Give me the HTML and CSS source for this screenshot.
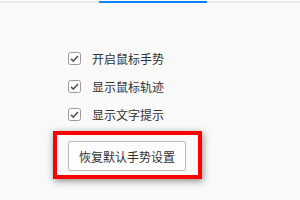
FILE: index.html
```html
<!doctype html>
<html lang="zh-CN">
<head>
    <meta charset="UTF-8">
    <title>鼠标手势</title>
    <link rel="stylesheet" href="styles.css">
</head>
<body>

<div class="tab-bar">
    <div class="tab-track">
        <div class="tab-active"></div>
    </div>
</div>

<ul class="options">
    <li>
        <svg class="check" width="13" height="13" viewBox="0 0 13 13">
            <rect x="0.5" y="0.5" width="12" height="12" rx="2" fill="#fff" stroke="#9a9a9a"/>
            <polyline points="3,6.8 5.3,9 10,4" fill="none" stroke="#555" stroke-width="1.6"/>
        </svg>
        <span>开启鼠标手势</span>
    </li>
    <li>
        <svg class="check" width="13" height="13" viewBox="0 0 13 13">
            <rect x="0.5" y="0.5" width="12" height="12" rx="2" fill="#fff" stroke="#9a9a9a"/>
            <polyline points="3,6.8 5.3,9 10,4" fill="none" stroke="#555" stroke-width="1.6"/>
        </svg>
        <span>显示鼠标轨迹</span>
    </li>
    <li>
        <svg class="check" width="13" height="13" viewBox="0 0 13 13">
            <rect x="0.5" y="0.5" width="12" height="12" rx="2" fill="#fff" stroke="#9a9a9a"/>
            <polyline points="3,6.8 5.3,9 10,4" fill="none" stroke="#555" stroke-width="1.6"/>
        </svg>
        <span>显示文字提示</span>
    </li>
</ul>

<div class="highlight">
    <button class="reset-btn">恢复默认手势设置</button>
</div>

</body>
</html>
```

FILE: styles.css
```css
* {
    padding: 0;
    margin: 0;
    list-style: none;
    box-sizing: border-box;
}

body {
    width: 300px;
    height: 200px;
    overflow: hidden;
    background-color: #f9f9f9;
    font-family: "Noto Sans CJK SC", "Noto Sans", sans-serif;
    font-size: 12px;
    color: #333;
}

.tab-bar {
    padding-top: 1px;
}

.tab-bar .tab-track {
    height: 2px;
    background-color: #ebebeb;
}

.tab-bar .tab-active {
    margin-left: 99px;
    width: 108px;
    height: 2px;
    background-color: #0a84ff;
}

.options {
    margin-top: 41px;
    padding-left: 68px;
}

.options li {
    display: flex;
    align-items: center;
    height: 28px;
}

.options .check {
    display: block;
    margin-right: 11px;
}

.highlight {
    display: flex;
    margin: 3px 0 0 53px;
    width: 149px;
    height: 48px;
    padding: 6px 12px 4px 11px;
    border: 4px solid #ff0000;
    box-shadow: 1px 2px 7px rgba(0, 0, 0, 0.45);
}

.highlight .reset-btn {
    width: 118px;
    height: 30px;
    background-color: #fdfdfd;
    border: 1px solid #bcbcbc;
    border-radius: 2px;
    font-family: inherit;
    font-size: 12px;
    color: #333;
}
```
